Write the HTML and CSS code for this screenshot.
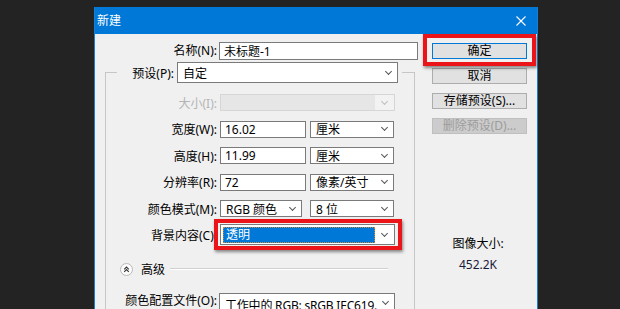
FILE: index.html
```html
<!DOCTYPE html>
<html lang="zh-CN">
<head>
    <meta charset="UTF-8">
    <meta name="viewport" content="width=device-width, initial-scale=1.0">
    <title>新建</title>
    <link rel="stylesheet" href="styles.css">
</head>
<body>
    <div class="dialog">
        <div class="titlebar">
            <span class="title">新建</span>
            <svg class="close" width="10" height="10" viewBox="0 0 10 10">
                <path d="M0.5 0.5L9.5 9.5M9.5 0.5L0.5 9.5" stroke="#fff" stroke-width="1.1" fill="none"/>
            </svg>
        </div>

        <div class="dialog-body">
            <div class="main">
                <div class="name-row">
                    <label class="name-label">名称(N):</label>
                    <input class="text-input name-input" type="text" value="未标题-1">
                </div>

                <fieldset class="group">
                    <legend class="preset">
                        <label class="preset-label">预设(P):</label>
                        <div class="combo preset-combo"><span>自定</span><span class="arrow"></span></div>
                    </legend>

                    <div class="row row-first">
                        <label class="row-label disabled">大小(I):</label>
                        <div class="combo combo-disabled size-combo"><span class="fill"></span><span class="arrow-box"><span class="arrow"></span></span></div>
                    </div>

                    <div class="row">
                        <label class="row-label">宽度(W):</label>
                        <input class="text-input num-input" type="text" value="16.02">
                        <div class="combo unit-combo"><span>厘米</span><span class="arrow"></span></div>
                    </div>

                    <div class="row">
                        <label class="row-label">高度(H):</label>
                        <input class="text-input num-input" type="text" value="11.99">
                        <div class="combo unit-combo"><span>厘米</span><span class="arrow"></span></div>
                    </div>

                    <div class="row">
                        <label class="row-label">分辨率(R):</label>
                        <input class="text-input num-input" type="text" value="72">
                        <div class="combo unit-combo"><span>像素/英寸</span><span class="arrow"></span></div>
                    </div>

                    <div class="row">
                        <label class="row-label">颜色模式(M):</label>
                        <div class="combo mode-combo"><span>RGB 颜色</span><span class="arrow"></span></div>
                        <div class="combo depth-combo"><span>8 位</span><span class="arrow"></span></div>
                    </div>

                    <div class="row row-tall row-bg">
                        <label class="row-label">背景内容(C):</label>
                        <div class="combo bg-combo marked"><span class="selected">透明</span><span class="arrow-box"><span class="arrow"></span></span></div>
                    </div>

                    <div class="advanced">
                        <svg class="toggle" width="13" height="13" viewBox="0 0 13 13">
                            <circle cx="6.5" cy="6.5" r="6" fill="#fbfbfb" stroke="#b8b8b8"/>
                            <path d="M4.2 6.3L6.5 4.1L8.8 6.3M4.2 8.8L6.5 6.6L8.8 8.8" stroke="#333" stroke-width="1.1" fill="none"/>
                        </svg>
                        <span class="advanced-label">高级</span>
                        <span class="rule"></span>
                    </div>

                    <div class="row row-tall row-profile">
                        <label class="row-label">颜色配置文件(O):</label>
                        <div class="combo profile-combo"><span class="clip">工作中的 RGB: sRGB IEC619...</span><span class="arrow"></span></div>
                    </div>
                </fieldset>
            </div>

            <div class="side">
                <button class="btn btn-default marked">确定</button>
                <button class="btn">取消</button>
                <button class="btn">存储预设(S)...</button>
                <button class="btn" disabled>删除预设(D)...</button>

                <div class="image-size">
                    <p>图像大小:</p>
                    <p class="size-value">452.2K</p>
                </div>
            </div>
        </div>
    </div>
</body>
</html>
```

FILE: styles.css
```css
* {
    box-sizing: border-box;
}

body {
    margin: 0;
    height: 309px;
    overflow: hidden;
    background-color: #232323;
    font-family: "Noto Sans", "Noto Sans CJK SC", sans-serif;
    font-size: 12px;
    color: #000;
}

.dialog {
    width: 444px;
    height: 330px;
    margin: 7px 0 0 94px;
    border-left: 1px solid #1a7fd4;
    border-right: 1px solid #1a7fd4;
    background-color: #f0f0f0;
}

.titlebar {
    height: 27px;
    display: flex;
    align-items: center;
    justify-content: space-between;
    padding: 0 11px 0 2px;
    background-color: #0078d7;
    color: #fff;
}

.title {
    font-size: 12px;
    line-height: 1;
}

.dialog-body {
    display: flex;
}

.main {
    width: 325px;
    padding-top: 8px;
}

.name-row {
    display: flex;
    height: 18px;
}

.name-label {
    width: 124px;
    padding-right: 2px;
    text-align: right;
    line-height: 18px;
}

.text-input {
    height: 17px;
    margin: 0;
    padding: 0 4px;
    border: 1px solid #7a7a7a;
    background-color: #fff;
    font: inherit;
    color: #000;
    outline: none;
}

.name-input {
    width: 199px;
    height: 18px;
}

/* group box, the preset combo sits in its title */
.group {
    margin: 2px 0 0 10px;
    width: 310px;
    min-height: 280px;
    padding: 11px 0 0 0;
    border: 1px solid #c6c6c6;
}

.preset {
    display: flex;
    align-items: center;
    margin-left: 11px;
    padding: 0 4px 0 0;
}

.preset-label {
    width: 60px;
    padding-right: 3px;
    text-align: right;
}

.combo {
    display: flex;
    align-items: center;
    justify-content: space-between;
    height: 17px;
    padding: 0 6px 0 5px;
    border: 1px solid #7a7a7a;
    background-color: #fff;
    white-space: nowrap;
}

.arrow {
    flex: none;
    width: 5px;
    height: 5px;
    margin-top: -3px;
    border-right: 1px solid #555;
    border-bottom: 1px solid #555;
    transform: rotate(45deg);
}

.preset-combo {
    width: 221px;
    height: 21px;
}

.row {
    display: flex;
    align-items: center;
    height: 17px;
    margin-top: 9.5px;
}

.row-first {
    margin-top: 0;
}

.row-label {
    flex: none;
    width: 114px;
    padding-right: 3px;
    text-align: right;
    white-space: nowrap;
}

.row-label.disabled {
    color: #b4b4b4;
}

.combo-disabled {
    width: 175px;
    padding: 0;
    border-color: #d6d6d6;
    background-color: #e6e6e6;
}

.combo-disabled .fill {
    flex: 1;
}

.arrow-box {
    display: flex;
    align-items: center;
    justify-content: center;
    width: 19px;
    height: 100%;
}

.combo-disabled .arrow-box {
    background-color: #f2f2f2;
}

.combo-disabled .arrow {
    border-color: #bdbdbd;
}

.num-input {
    width: 86px;
}

.unit-combo {
    width: 84px;
    margin-left: 4px;
}

.mode-combo {
    width: 82px;
}

.depth-combo {
    width: 84px;
    margin-left: 8px;
}

.row-tall {
    height: 21px;
}

.row-bg {
    margin-top: 7px;
}

.bg-combo {
    width: 175px;
    height: 21px;
    padding: 2px 0 1px 2px;
}

.selected {
    flex: 1;
    height: 100%;
    padding-left: 2px;
    border: 1px dotted #c9893a;
    background-color: #0078d7;
    color: #fff;
    line-height: 13px;
}

/* red annotation frames */
.marked {
    position: relative;
}

.marked::after {
    content: "";
    position: absolute;
    border: 4px solid #ea1419;
    box-shadow: 1px 2px 3px rgba(0, 0, 0, 0.45);
}

.bg-combo.marked::after {
    top: -6px;
    right: -8px;
    bottom: -6px;
    left: -7px;
}

.advanced {
    display: flex;
    align-items: center;
    height: 14px;
    margin-top: 17px;
}

.toggle {
    margin-left: 14px;
}

.advanced-label {
    margin-left: 8px;
}

.rule {
    flex: 1;
    height: 2px;
    margin: 0 26px 0 5px;
    border-top: 1px solid #d0d0d0;
    border-bottom: 1px solid #fff;
}

.row-profile {
    align-items: flex-start;
    margin-top: 17px;
}

.row-profile .row-label {
    line-height: 16px;
}

.profile-combo {
    width: 176px;
    height: 21px;
    margin-left: -1px;
    padding-top: 2px;
    align-items: flex-start;
}

.profile-combo .arrow {
    margin-top: 3px;
}

.clip {
    overflow: hidden;
    margin-right: 6px;
    letter-spacing: -0.2px;
}

.side {
    width: 116px;
    padding-top: 9px;
    display: flex;
    flex-direction: column;
    gap: 9px;
}

.btn {
    width: 95px;
    height: 16px;
    margin: 0 0 0 12px;
    padding: 0;
    border: 1px solid #adadad;
    background-color: #e1e1e1;
    font: inherit;
    line-height: 14px;
    color: #000;
}

.btn-default {
    border-color: #0078d7;
}

.btn-default.marked::after {
    top: -10px;
    right: -10px;
    bottom: -8px;
    left: -10px;
}

.btn:disabled {
    border-color: #bfbfbf;
    background-color: #cccccc;
    color: #9c9c9c;
}

.image-size {
    margin-top: 93px;
    text-align: center;
}

.image-size p {
    margin: 0;
    line-height: 16px;
}

.size-value {
    margin-top: 5px !important;
    color: #1a1a3a;
}
```
